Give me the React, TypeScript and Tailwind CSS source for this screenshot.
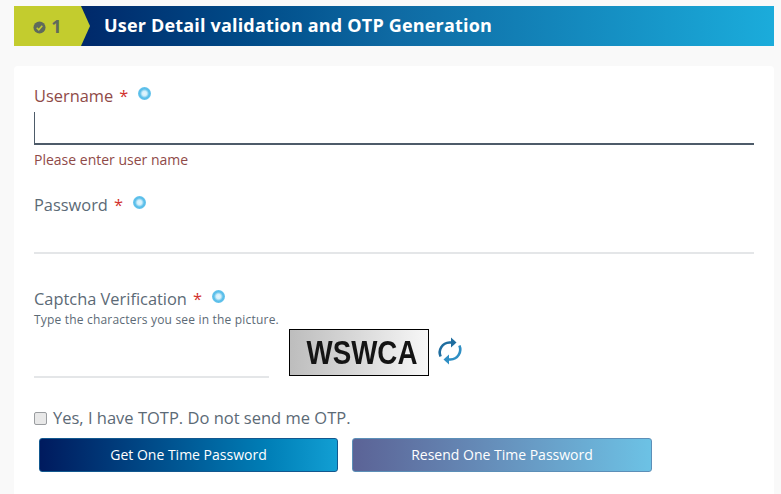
const sans = "font-['Open_Sans','Noto_Sans',sans-serif]";

function InfoDot({ className }: { className: string }) {
  return (
    <span
      className={`block h-[13px] w-[13px] rounded-full bg-[radial-gradient(circle,#e4f6fd_0%,#d2effb_25%,#57bde9_50%,#7ccdf0_100%)] ${className}`}
    />
  );
}

function FieldLabel({ text, red }: { text: string; red?: boolean }) {
  return (
    <div className={`flex h-[24px] items-center text-[16.4px] ${red ? "text-[#8f4a48]" : "text-[#5c6a76]"}`}>
      <span>{text}</span>
      <span className="ml-[6px] text-[#d2322d]">*</span>
      <InfoDot className="mb-[6px] ml-[10px]" />
    </div>
  );
}

function RefreshIcon() {
  return (
    <svg width="26" height="30" viewBox="0 0 26 30" className="ml-[8px] mt-[9px]" fill="none">
      <path d="M3.6 20.5A10 10 0 0 1 12.5 6.5H15" stroke="#1f6d9f" strokeWidth="2.6" />
      <path d="M14 1.5 19.5 6.5 14 11.5Z" fill="#1f6d9f" />
      <path d="M22.4 9.5A10 10 0 0 1 13.5 23.5H11" stroke="#2f8fc4" strokeWidth="2.6" />
      <path d="M12 18.5 6.5 23.5 12 28.5Z" fill="#2f8fc4" />
    </svg>
  );
}

export default function App() {
  return (
    <div className={`h-[494px] w-[781px] overflow-hidden bg-[#f9f9f9] pl-[14px] pt-[6px] ${sans}`}>
      <div className="flex h-[40px] w-[760px] bg-gradient-to-r from-[#001a5e] via-[#0f6aa3] to-[#1bacdb]">
        <div className="flex w-[67px] items-center justify-center gap-[5px] bg-[#c3cc2e] text-[#5f6a5c]">
          <svg width="13" height="13" viewBox="0 0 14 14" className="mt-[2px]">
            <circle cx="7" cy="7" r="6.5" fill="#5f6a5c" />
            <path d="M4 7.2 6.2 9.4 10 5" fill="none" stroke="#c3cc2e" strokeWidth="1.7" />
          </svg>
          <span className="text-[18px] font-bold">1</span>
        </div>
        <div className="h-[40px] w-[9px] bg-[#c3cc2e] [clip-path:polygon(0_0,100%_50%,0_100%)]" />
        <div className="ml-[14px] flex items-center pb-[1px] text-[18px] font-bold tracking-[0.18px] text-white">
          User Detail validation and OTP Generation
        </div>
      </div>

      <div className="mt-[20px] h-[430px] w-[760px] rounded-t-[4px] bg-white pl-[20px] pt-[18px]">
        <FieldLabel text="Username" red />
        <div className="mt-[4px] h-[33px] w-[720px] border-b-2 border-l border-[#4d5b69]" />
        <p className="mt-[6px] text-[14px] leading-[18px] text-[#8f4a48]">Please enter user name</p>

        <div className="mt-[24px]">
          <FieldLabel text="Password" />
        </div>
        <div className="mt-[12px] h-[25px] w-[720px] border-b-2 border-[#e4e6e8]" />

        <div className="mt-[33px]">
          <FieldLabel text="Captcha Verification" />
        </div>
        <p className="pt-[1px] text-[12px] leading-[16px] tracking-[0.19px] text-[#5c6a76]">Type the characters you see in the picture.</p>

        <div className="-mt-[1px] flex">
          <div className="h-[51px] w-[235px] border-b-2 border-[#e4e6e8]" />
          <div className="ml-[20px] mt-[2px] flex h-[47px] w-[140px] items-center justify-center overflow-hidden border border-black bg-gradient-to-r from-[#bdbdbd] to-[#f7f7f7] pl-[6px] font-['Liberation_Sans',sans-serif] text-[33px] font-bold text-[#141414]">
            <span className="scale-x-[0.84] blur-[0.5px]">WSWCA</span>
          </div>
          <RefreshIcon />
        </div>

        <label className="mt-[28px] flex h-[24px] items-center text-[16.5px] text-[#5c6a76]">
          <input
            type="checkbox"
            className="h-[13px] w-[13px] appearance-none rounded-[2px] border border-[#9a9da0] bg-[#e8e8e8]"
          />
          <span className="ml-[6px]">Yes, I have TOTP. Do not send me OTP.</span>
        </label>

        <div className="ml-[5px] mt-[8px] flex gap-[14px]">
          <button
            type="button"
            className="h-[34px] w-[299px] rounded-[3px] border border-[#12588f] bg-gradient-to-r from-[#001a5e] to-[#129fd3] pb-[2px] text-[14px] text-white"
          >
            Get One Time Password
          </button>
          <button
            type="button"
            className="h-[34px] w-[300px] rounded-[3px] border border-[#5c8fb8] bg-gradient-to-r from-[#5b6396] to-[#6cc2e5] pb-[2px] text-[14px] text-white"
          >
            Resend One Time Password
          </button>
        </div>
      </div>
    </div>
  );
}
